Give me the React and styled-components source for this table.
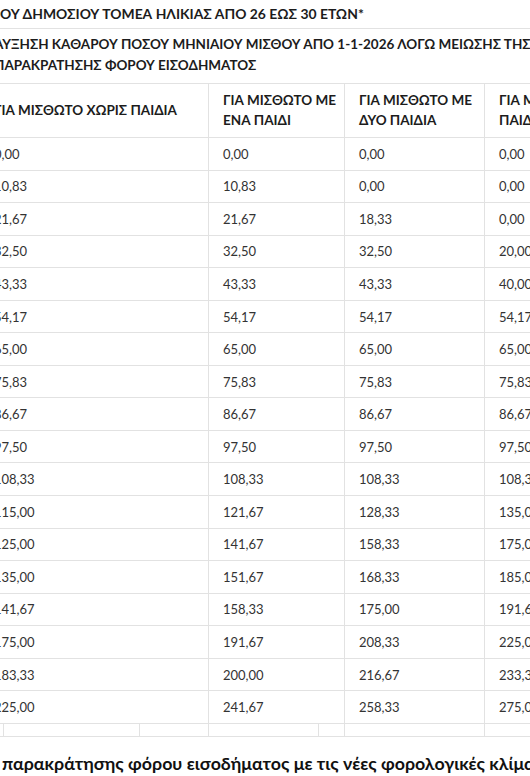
import React from "react";
import styled, { createGlobalStyle } from "styled-components";

const GlobalStyle = createGlobalStyle`
  html, body {
    margin: 0;
    padding: 0;
    background: #fff;
    overflow: hidden;
  }
  body {
    font-family: Lato, "Open Sans", "Noto Sans", sans-serif;
    color: #333;
  }
`;

const Page = styled.div`
  width: 700px;
  margin-left: -20px;
`;

const TitleRow = styled.div`
  padding: ${(p) => (p.$first ? "6px 14px 6px 20px" : "5px 14px 7px")};
  border-bottom: 1px solid #e2e2e2;
  font-size: ${(p) => (p.$first ? "13.9px" : "13.5px")};
  font-weight: 700;
  line-height: ${(p) => (p.$first ? "16px" : "21px")};
  color: #1c1c1c;
  white-space: nowrap;
`;

const Grid = styled.div`
  display: grid;
  grid-template-columns: 228px 136px 140px 140px;
`;

const HeadCell = styled.div`
  display: flex;
  align-items: center;
  padding: 6px 14px 7px;
  border-bottom: 1px solid #e2e2e2;
  border-left: ${(p) => (p.$first ? "none" : "1px solid #e2e2e2")};
  font-size: 13.5px;
  font-weight: 700;
  line-height: 20px;
  color: #1c1c1c;
  white-space: nowrap;
`;

const Cell = styled.div`
  box-sizing: border-box;
  height: 32.55px;
  display: flex;
  align-items: center;
  padding: 0 14px;
  border-bottom: 1px solid #e2e2e2;
  border-left: ${(p) => (p.$first ? "none" : "1px solid #e2e2e2")};
  font-size: 13px;
  color: #333;
  white-space: nowrap;
`;

const FillerRow = styled.div`
  display: grid;
  grid-template-columns: 23px 136px 69px 110px 26px 140px 140px;
  height: 12px;
  border-bottom: 1px solid #e2e2e2;
`;

const FillerCell = styled.div`
  border-left: ${(p) => (p.$first ? "none" : "1px solid #e2e2e2")};
`;

const Caption = styled.p`
  margin: 15px 0 0 22px;
  font-size: 17.8px;
  font-weight: 700;
  color: #111;
  white-space: nowrap;
`;

const rows = [
  ["0,00", "0,00", "0,00", "0,00"],
  ["10,83", "10,83", "0,00", "0,00"],
  ["21,67", "21,67", "18,33", "0,00"],
  ["32,50", "32,50", "32,50", "20,00"],
  ["43,33", "43,33", "43,33", "40,00"],
  ["54,17", "54,17", "54,17", "54,17"],
  ["65,00", "65,00", "65,00", "65,00"],
  ["75,83", "75,83", "75,83", "75,83"],
  ["86,67", "86,67", "86,67", "86,67"],
  ["97,50", "97,50", "97,50", "97,50"],
  ["108,33", "108,33", "108,33", "108,33"],
  ["115,00", "121,67", "128,33", "135,00"],
  ["125,00", "141,67", "158,33", "175,00"],
  ["135,00", "151,67", "168,33", "185,00"],
  ["141,67", "158,33", "175,00", "191,67"],
  ["175,00", "191,67", "208,33", "225,00"],
  ["183,33", "200,00", "216,67", "233,33"],
  ["225,00", "241,67", "258,33", "275,00"],
];

const App = () => {
  return (
    <>
      <GlobalStyle />
      <Page>
        <TitleRow $first>ΟΥ ΔΗΜΟΣΙΟΥ ΤΟΜΕΑ ΗΛΙΚΙΑΣ ΑΠΟ 26 ΕΩΣ 30 ΕΤΩΝ*</TitleRow>
        <TitleRow>
          ΑΥΞΗΣΗ ΚΑΘΑΡΟΥ ΠΟΣΟΥ ΜΗΝΙΑΙΟΥ ΜΙΣΘΟΥ ΑΠΟ 1-1-2026 ΛΟΓΩ ΜΕΙΩΣΗΣ ΤΗΣ
          <br />
          ΠΑΡΑΚΡΑΤΗΣΗΣ ΦΟΡΟΥ ΕΙΣΟΔΗΜΑΤΟΣ
        </TitleRow>
        <Grid>
          <HeadCell $first>ΓΙΑ ΜΙΣΘΩΤΟ ΧΩΡΙΣ ΠΑΙΔΙΑ</HeadCell>
          <HeadCell>
            ΓΙΑ ΜΙΣΘΩΤΟ ΜΕ
            <br />
            ΕΝΑ ΠΑΙΔΙ
          </HeadCell>
          <HeadCell>
            ΓΙΑ ΜΙΣΘΩΤΟ ΜΕ
            <br />
            ΔΥΟ ΠΑΙΔΙΑ
          </HeadCell>
          <HeadCell>
            ΓΙΑ ΜΙΣΘΩΤΟ ΜΕ ΤΡΙΑ
            <br />
            ΠΑΙΔΙΑ
          </HeadCell>
          {rows.map((row, i) =>
            row.map((value, j) => (
              <Cell key={`${i}-${j}`} $first={j === 0}>
                {value}
              </Cell>
            ))
          )}
        </Grid>
        <FillerRow>
          {Array.from({ length: 7 }).map((_, i) => (
            <FillerCell key={i} $first={i === 0} />
          ))}
        </FillerRow>
        <Caption>
          παρακράτησης φόρου εισοδήματος με τις νέες φορολογικές κλίμακες
        </Caption>
      </Page>
    </>
  );
};

export default App;
